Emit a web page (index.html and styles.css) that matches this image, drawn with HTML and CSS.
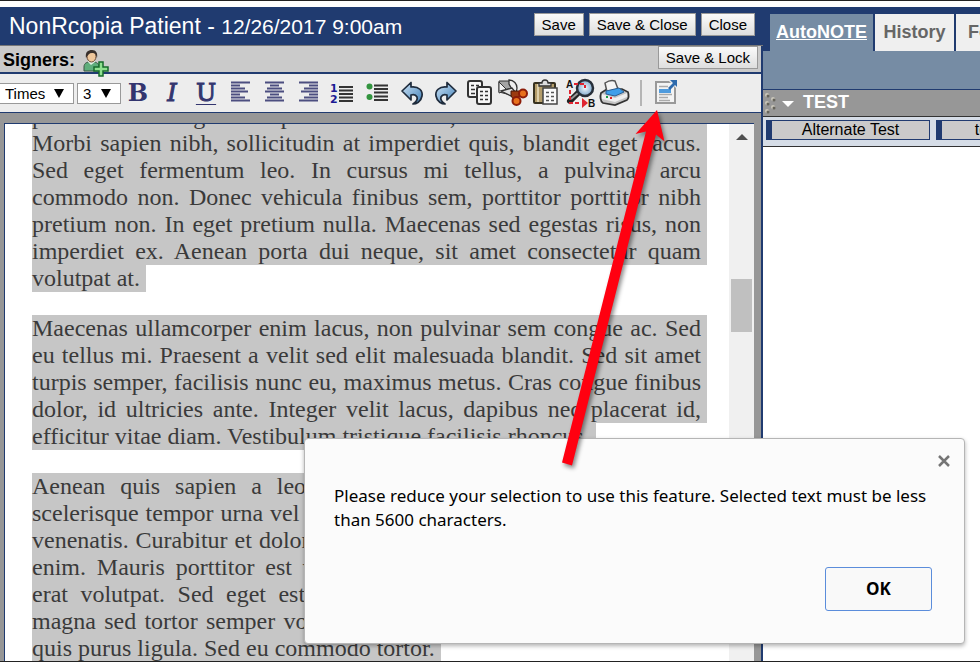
FILE: index.html
```html
<!DOCTYPE html>
<html lang="en">
<head>
<meta charset="utf-8">
<title>NonRcopia Patient</title>
<link rel="stylesheet" href="styles.css">
</head>
<body>
<div class="app">
  <main class="note">
    <header class="titlebar">
      <h1>NonRcopia Patient - <small>12/26/2017 9:00am</small></h1>
      <button type="button" class="btn">Save</button>
      <button type="button" class="btn">Save &amp; Close</button>
      <button type="button" class="btn">Close</button>
    </header>
    <div class="signers">
      <strong>Signers:</strong>
      <button type="button" class="add-signer" aria-label="Add signer">
        <svg width="28" height="28" viewBox="0 0 28 28">
          <path d="M1 21v-4c0-4 3-5 6-5h3c4 0 6 2 6 5v4z" fill="#5fae7c" stroke="#3b5744"/>
          <path d="M5 12l3 3 4-3v-3H5z" fill="#dff0e3"/>
          <ellipse cx="8.500" cy="6.500" rx="4.500" ry="5.500" fill="#eec79b" stroke="#6a4a35"/>
          <path d="M3 8C2 2 5 0 9 0c4 0 6 3 5 8-1-4-2-5-5-5S5 5 3 8z" fill="#38302c"/>
          <path d="M16 12h4v5h5v4h-5v5h-4v-5h-5v-4h5z" fill="#8fe08f" stroke="#176b2c" stroke-width="1.500"/>
        </svg>
      </button>
      <button type="button" class="btn">Save &amp; Lock</button>
    </div>
    <div class="toolbar">
      <label class="pick font"><select aria-label="Font"><option>Times</option></select></label>
      <label class="pick size"><select aria-label="Font size"><option>3</option></select></label>
      <button type="button" class="tool letter">B</button>
      <button type="button" class="tool letter italic">I</button>
      <button type="button" class="tool letter under">U</button>
      <button type="button" class="tool" aria-label="Align left"><svg viewBox="0 0 32 32"><path d="M7 5.500h19M7 8.500h9M7 11.500h14M7 14.500h17M7 17.500h9M7 20.500h14M7 23.500h19" class="bars"/></svg></button>
      <button type="button" class="tool" aria-label="Align center"><svg viewBox="0 0 32 32"><path d="M7 5.500h19M12 8.500h9M9 11.500h15M7 14.500h19M12 17.500h9M9 20.500h15M7 23.500h19" class="bars"/></svg></button>
      <button type="button" class="tool" aria-label="Align right"><svg viewBox="0 0 32 32"><path d="M7 5.500h19M17 8.500h9M12 11.500h14M9 14.500h17M17 17.500h9M12 20.500h14M7 23.500h19" class="bars"/></svg></button>
      <button type="button" class="tool" aria-label="Numbered list"><svg viewBox="0 0 32 32"><text x="4" y="15" class="num">1</text><text x="4" y="26" class="num">2</text><path d="M13 10h14M13 13.500h14M13 17h14M13 20.500h14M13 24h14" stroke="#333" stroke-width="2"/></svg></button>
      <button type="button" class="tool" aria-label="Bulleted list"><svg viewBox="0 0 32 32"><circle cx="9.500" cy="9.500" r="3" fill="#32943f"/><circle cx="9.500" cy="20" r="3" fill="#32943f"/><path d="M14 8.500h14M14 12h14M14 15.500h14M14 19.500h14M14 23h14" stroke="#333" stroke-width="2"/></svg></button>
      <button type="button" class="tool" aria-label="Undo"><svg viewBox="0 0 32 32"><path d="M8 14L17 5.500V10c8-1 12 4 11 9-1 6-6 8-9 8 3-2 5-4 4-7-1-2-3-3-6-2v5z" fill="url(#blue)" stroke="#1e2b3c" stroke-width="1.700" stroke-linejoin="round"/></svg></button>
      <button type="button" class="tool" aria-label="Redo"><svg viewBox="0 0 32 32"><path d="M28 14L19 5.500V10C11 9 7 14 8 19c1 6 6 8 9 8-3-2-5-4-4-7 1-2 3-3 6-2v5z" fill="url(#blue)" stroke="#1e2b3c" stroke-width="1.700" stroke-linejoin="round"/></svg></button>
      <button type="button" class="tool" aria-label="Copy"><svg viewBox="0 0 32 32"><g fill="#f6f6f6" stroke="#333" stroke-width="2"><rect x="6" y="4" width="14" height="16" rx="2"/><rect x="15" y="10" width="14" height="17" rx="2"/></g><path d="M9 8.500h3m2 0h3M9 12.500h4M9 16.500h4M18 14.500h3m2 0h3M18 18.500h3m2 0h3M18 22.500h3m2 0h3" stroke="#333" stroke-width="1.500"/></svg></button>
      <button type="button" class="tool" aria-label="Cut"><svg viewBox="0 0 32 32"><path d="M3 4h11l7 11-6 3L3 15z" fill="#a5a5a5" stroke="#333"/><path d="M3 5l8 8-8 3z" fill="#f2f2f2" stroke="#333"/><path d="M13 3c5 0 8 4 8 8l-1 6-3-3-4-7z" fill="#eee" stroke="#333" stroke-width="1.300"/><path d="M5 14l11-3 4 5-5 3z" fill="#e2e2e2" stroke="#333" stroke-width="1.300"/><path d="M15 14l8 0 1 5-6 4-3-4z" fill="#9b3a10" stroke="#431709"/><ellipse cx="27" cy="16.500" rx="4" ry="4" class="loop"/><ellipse cx="20.500" cy="24" rx="4" ry="4" class="loop"/></svg></button>
      <button type="button" class="tool" aria-label="Paste"><svg viewBox="0 0 32 32"><rect x="4" y="6" width="21" height="20" rx="1" fill="#b39c69" stroke="#37311f" stroke-width="2"/><path d="M8 7v18" stroke="#ddcfaa" stroke-width="2"/><path d="M9 9V6h3c0-4 6-4 6 0h3v3z" fill="#ddd" stroke="#333" stroke-width="1.300"/><rect x="13" y="11" width="14" height="16" fill="#fafafa" stroke="#444" stroke-width="1.500"/><path d="M16 15.500h3m2 0h3M16 19.500h3m2 0h3M16 23.500h3m2 0h3" stroke="#555" stroke-width="1.500"/></svg></button>
      <button type="button" class="tool" aria-label="Find and replace"><svg viewBox="0 0 32 32"><path d="M15 15L6 24" stroke="#222" stroke-width="6" stroke-linecap="round"/><path d="M14 16L7 22" stroke="#999" stroke-width="2"/><circle cx="21" cy="11" r="8" fill="url(#lens)" stroke="#28303a" stroke-width="2.500"/><path d="M10 7h11v4M6 13v13h9" stroke="#df2430" stroke-width="2" stroke-dasharray="4 2" fill="none"/><path d="M18 21l6 5-6 5z" fill="#df2430"/><text x="2" y="11" class="ab">A</text><text x="24" y="30" class="ab">B</text></svg></button>
      <button type="button" class="tool" aria-label="Print"><svg viewBox="0 0 32 32"><path d="M3 16l6-4h15l6 3c1 3 1 6-1 8l-12 5-12-2c-3-2-3-7-2-10z" fill="#c4c4c4" stroke="#333" stroke-width="1.700"/><path d="M4 17l13 4 12-5v4l-12 5-13-3z" fill="#efefef"/><path d="M7 6c3-2 7-3 10-2l3 8-11 3z" fill="#f5f5f5" stroke="#555" stroke-width="1.500"/><path d="M8 14l13-3 5 4-9 4-9-2z" fill="#3f9fea" stroke="#2a5f94"/><path d="M12 21h2" stroke="#d22" stroke-width="2"/><path d="M8 20h2" stroke="#1a9c43" stroke-width="2"/></svg></button>
      <span class="rule"></span>
      <button type="button" class="tool" aria-label="Send selection to new window"><svg viewBox="0 0 32 32"><rect x="5" y="5" width="19" height="21" fill="#f4f4f4" stroke="#999" stroke-width="2"/><path d="M8 9.500h9M8 17.500h13M8 20.500h9M8 23.500h11" stroke="#aaa" stroke-width="1.500"/><path d="M8 12h12v4H8z" fill="#4f9bdd"/><path d="M16 2h11v11z" fill="#ededed"/><path d="M19 3h7v7l-2-2-5 5-2-2 5-5z" fill="#2e6aac"/></svg></button>
    </div>
    <div class="editor-frame">
      <div class="editor">
        <div class="page">
          <p><span>placerat in ante gravida ipsum consectetur, tincidunt lectus ultricies</span>
            <span>Morbi sapien nibh, sollicitudin at imperdiet quis, blandit eget lacus.</span>
            <span>Sed eget fermentum leo. In cursus mi tellus, a pulvinar arcu</span>
            <span>commodo non. Donec vehicula finibus sem, porttitor porttitor nibh</span>
            <span>pretium non. In eget pretium nulla. Maecenas sed egestas risus, non</span>
            <span>imperdiet ex. Aenean porta dui neque, sit amet consectetur quam</span>
            <span class="end">volutpat at.</span></p>
          <p><span>Maecenas ullamcorper enim lacus, non pulvinar sem congue ac. Sed</span>
            <span>eu tellus mi. Praesent a velit sed elit malesuada blandit. Sed sit amet</span>
            <span>turpis semper, facilisis nunc eu, maximus metus. Cras congue finibus</span>
            <span>dolor, id ultricies ante. Integer velit lacus, dapibus nec placerat id,</span>
            <span class="end">efficitur vitae diam. Vestibulum tristique facilisis rhoncus.</span></p>
          <p><span>Aenean quis sapien a leo consectetur efficitur porttitor sodales</span>
            <span>scelerisque tempor urna vel consectetur porttitor efficitur id aliquam,</span>
            <span>venenatis. Curabitur et dolor consectetur sodales, vehicula quis lacus</span>
            <span>enim. Mauris porttitor est vehicula consectetur efficitur sit mattis.</span>
            <span>erat volutpat. Sed eget est consectetur porttitor vehicula efficitur</span>
            <span>magna sed tortor semper volutpat consectetur efficitur sodales lacus</span>
            <span class="end">quis purus ligula. Sed eu commodo tortor.</span></p>
        </div>
        <div class="scrollbar"><i class="up"></i><i class="thumb"></i></div>
      </div>
    </div>
  </main>
  <aside class="side">
    <nav class="tabs">
      <a href="#autonote" class="tab active">AutoNOTE</a>
      <a href="#history" class="tab">History</a>
      <a href="#forms" class="tab">Forms</a>
    </nav>
    <div class="band"></div>
    <div class="section">
      <svg class="grip" width="12" height="24" viewBox="0 0 12 24"><g fill="#c9c6ba"><circle cx="3" cy="4" r="2"/><circle cx="9" cy="8" r="2"/><circle cx="3" cy="12" r="2"/><circle cx="9" cy="16" r="2"/><circle cx="3" cy="20" r="2"/></g><g fill="#66645b"><circle cx="4" cy="5" r="1.500"/><circle cx="10" cy="9" r="1.500"/><circle cx="4" cy="13" r="1.500"/><circle cx="10" cy="17" r="1.500"/><circle cx="4" cy="21" r="1.500"/></g></svg>
      <i class="caret"></i>
      <h2>TEST</h2>
    </div>
    <div class="templates">
      <button type="button">Alternate Test</button>
      <button type="button">test template</button>
    </div>
  </aside>
</div>
<div class="dialog" role="alertdialog" aria-labelledby="message">
  <button type="button" class="dismiss" aria-label="Dismiss"><svg width="12" height="12" viewBox="0 0 12 12"><path d="M1 1l10 10M11 1L1 11" stroke="#757575" stroke-width="2.500"/></svg></button>
  <p id="message">Please reduce your selection to use this feature. Selected text must be less than 5600 characters.</p>
  <button type="button" class="ok">OK</button>
</div>
<svg class="arrow" width="110" height="370" viewBox="560 105 110 370">
  <path d="M657 110l7.500 31.500-8.500-7-84 331-10-3 84-331-10.500 2.500z" fill="#ff0010"/>
</svg>
<svg width="0" height="0" class="defs">
  <linearGradient id="blue" x1="0" y1="0" x2="1" y2="1"><stop offset="0" stop-color="#cfe5f7"/><stop offset="1" stop-color="#3f7fb8"/></linearGradient>
  <radialGradient id="lens"><stop offset="0" stop-color="#f2f8fd"/><stop offset="1" stop-color="#7fa9cc"/></radialGradient>
</svg>
</body>
</html>
```
FILE: styles.css
```css
* { box-sizing: border-box; }

body {
  margin: 0;
  height: 100vh;
  display: flex;
  flex-direction: column;
  position: relative;
  overflow: hidden;
  border-top: 1px solid #222;
  border-bottom: 1px solid #222;
  padding-top: 6px;
  background: #fff;
  font-family: "Liberation Sans", Arial, sans-serif;
}

button, select { font-family: inherit; }

.app {
  flex: 1;
  min-height: 0;
  display: grid;
  grid-template-columns: minmax(0, 763fr) minmax(0, 217fr);
}

/* Note editor */
.note {
  display: flex;
  flex-direction: column;
  min-height: 0;
  border-right: 2px solid #203b70;
}

.titlebar {
  display: flex;
  align-items: center;
  gap: 5px;
  height: 39px;
  padding: 0 8px 4px 9px;
  margin-right: -2px;
  border-bottom: 1px solid #777;
  background: #203b70;
  color: #fff;
}

.titlebar h1 {
  flex: 1;
  margin: 4px 0 0;
  font-size: 23px;
  font-weight: 400;
  line-height: 28px;
  white-space: nowrap;
}

.titlebar small { font-size: 21px; }

.btn {
  height: 23px;
  padding: 0 7px;
  border: 1px solid #999;
  background: linear-gradient(#fafafa, #dedede);
  color: #000;
  font-size: 15px;
  line-height: 21px;
}

.signers {
  display: flex;
  align-items: flex-start;
  height: 28px;
  padding: 0 3px;
  border-bottom: 2px solid #203b70;
  background: #cacaca;
}

.signers strong { font-size: 18px; line-height: 28px; }

/* The plus badge hangs over the toolbar's edge. */
.add-signer {
  position: relative;
  z-index: 1;
  height: 28px;
  margin: 4px auto 0 8px;
  padding: 0;
  border: 0;
  background: none;
}

.add-signer svg { display: block; }

.toolbar {
  display: flex;
  align-items: center;
  height: 39px;
  border-bottom: 1px solid #203b70;
  background: #ededed;
}

.pick { position: relative; }

.pick::after {
  content: "";
  position: absolute;
  top: 6px;
  right: 10px;
  border: solid transparent;
  border-width: 9px 5px 0;
  border-top-color: #000;
  pointer-events: none;
}

.pick select {
  display: block;
  width: 100%;
  height: 21px;
  padding: 0 5px;
  border: 1px solid #999;
  border-radius: 0;
  appearance: none;
  background: #fff;
  color: #000;
  font-size: 15px;
}

.font { width: 75px; margin: 0 3px 0 -1px; }
.size { width: 44px; }

.tool {
  flex: none;
  width: 34px;
  height: 32px;
  padding: 0 1px;
  border: 0;
  background: none;
}

.tool svg { display: block; width: 32px; height: 32px; overflow: visible; }

.letter {
  color: #33356f;
  font: bold 24px/28px "DejaVu Serif", serif;
}

.italic { font-weight: 400; font-style: italic; -webkit-text-stroke: 1px #33356f; }
.under { text-decoration: underline; text-decoration-thickness: 1px; text-underline-offset: 3px; font-weight: 400; -webkit-text-stroke: 1px #33356f; }

.bars { stroke: #4c4e80; stroke-width: 2; }
.num { font: bold 11px "DejaVu Sans", sans-serif; fill: #1a1a94; }
.ab { font: bold 10px "Liberation Sans", sans-serif; fill: #111; }
.loop { fill: #e8701c; stroke: #8c1c08; stroke-width: 2; }

.rule { width: 2px; height: 26px; margin: 0 8px 0 9px; background: #b5b5b5; }

.editor-frame {
  flex: 1;
  min-height: 0;
  display: flex;
  padding: 10px 7px 0 4px;
  background: #979797;
}

.editor {
  flex: 1;
  min-width: 0;
  display: flex;
  overflow: hidden;
  border: solid #203b70;
  border-width: 1px 0 0 1px;
  background: #fff;
}

/* The page is shown scrolled part of the way down its first line. */
.page {
  flex: 1;
  margin: -21px 22px 0 27px;
  color: #3a3a3a;
  font: 24px/27px "Liberation Serif", "Times New Roman", serif;
}

.page p { margin: 0 0 23px; }

.page span {
  display: block;
  padding-right: 6px;
  background: #c6c6c6;
  text-align-last: justify;
  white-space: nowrap;
}

.page .end { width: fit-content; text-align-last: left; }

.scrollbar {
  width: 25px;
  padding: 10px 2px 0;
  background: #f0f0f0;
}

.up {
  display: block;
  margin: 0 auto;
  width: 12px;
  border: solid transparent;
  border-width: 0 6px 6px;
  border-bottom-color: #505050;
}

.thumb { display: block; height: 53px; margin-top: 139px; background: #c0c0c0; }

/* Side panel */
.side { display: flex; flex-direction: column; overflow: hidden; background: #fff; }

.tabs {
  display: flex;
  gap: 2px;
  padding: 7px 0 0 7px;
  background: #203b70;
}

.tab {
  flex: none;
  min-width: 79px;
  height: 37px;
  padding: 0 6px;
  background: #efefef;
  color: #666;
  font-size: 18px;
  font-weight: 700;
  line-height: 36px;
  text-align: center;
  text-decoration: none;
}

.active { background: #768ca4; color: #fff; text-decoration: underline; }

.band { height: 39px; border-bottom: 1px solid #203b70; background: #768ca4; }

.section {
  display: flex;
  align-items: center;
  height: 27px;
  padding-left: 1px;
  border-bottom: 1px solid #333;
  background: #979797;
  color: #fff;
}

.caret {
  margin: 2px 9px 0 6px;
  border: solid transparent;
  border-width: 6px 6px 0;
  border-top-color: #fff;
}

.section h2 { margin: 0 0 2px; font-size: 18px; line-height: 22px; }

.templates {
  display: flex;
  gap: 6px;
  padding: 3px;
  height: 30px;
  border-bottom: 1px solid #333;
  background: #d6dde7;
}

.templates button {
  flex: none;
  width: 164px;
  height: 20px;
  padding: 0;
  border: 1px solid #203b70;
  border-left-width: 6px;
  background: #cacaca;
  color: #000;
  font-size: 16px;
  line-height: 18px;
}

/* Alert */
.dialog {
  position: absolute;
  right: 15px;
  bottom: 17px;
  width: 661px;
  height: 206px;
  padding: 45px 32px 32px 29px;
  display: flex;
  flex-direction: column;
  border: 1px solid #b5b5b5;
  border-radius: 4px;
  background: #fbfbfb;
  box-shadow: 0 2px 4px rgba(0, 0, 0, .3);
  font-family: "Noto Sans", sans-serif;
}

.dialog p { margin: 0; font-size: 17px; line-height: 24px; color: #000; }

.dismiss {
  position: absolute;
  top: 16px;
  right: 14px;
  padding: 0;
  border: 0;
  background: none;
}

.dismiss svg { display: block; }

.ok {
  width: 107px;
  height: 44px;
  margin: auto 0 0 auto;
  padding: 0 0 2px;
  border: 1px solid #5b8ddb;
  border-radius: 3px;
  background: #f9f9f9;
  color: #000;
  font: bold 17px "Open Sans", sans-serif;
}

.arrow {
  position: absolute;
  top: 104px;
  left: 560px;
  filter: drop-shadow(2px 3px 2px rgba(0, 0, 0, .45));
}

.defs { position: absolute; }
```
